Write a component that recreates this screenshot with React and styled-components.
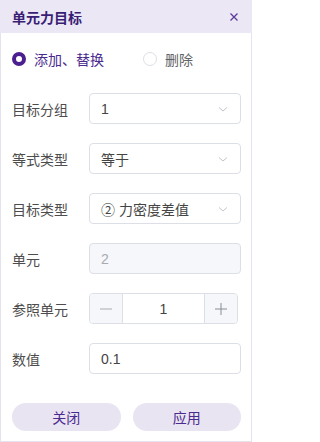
import React, { useState } from "react";
import styled, { createGlobalStyle } from "styled-components";

const GlobalStyle = createGlobalStyle`
  body {
    margin: 0;
    font-family: "Liberation Sans", "Noto Sans CJK SC", sans-serif;
    background: #fff;
  }
`;

const Panel = styled.div`
  width: 252px;
  height: 442px;
  box-sizing: border-box;
  border: 1px solid #e6e2ee;
  border-top: none;
  display: flex;
  flex-direction: column;
  background: #fff;
`;

const Header = styled.div`
  height: 33px;
  margin: 0 -1px;
  padding: 0 10px 0 12px;
  background: #ebe7f4;
  display: flex;
  align-items: center;
  justify-content: space-between;
`;

const Title = styled.div`
  font-size: 14px;
  font-weight: 700;
  color: #3a1d74;
`;

const Close = styled.button`
  border: none;
  background: none;
  padding: 0;
  width: 16px;
  height: 16px;
  display: flex;
  align-items: center;
  justify-content: center;
  cursor: pointer;
`;

const Body = styled.div`
  padding: 16px 10px 0 11px;
  display: flex;
  flex-direction: column;
`;

const RadioRow = styled.div`
  height: 20px;
  display: flex;
  align-items: center;
`;

const RadioItem = styled.label`
  display: flex;
  align-items: center;
  gap: 8px;
  width: ${(p) => p.width || "auto"};
  font-size: 14px;
  color: ${(p) => (p.checked ? "#4b2a90" : "#606266")};
  cursor: pointer;
`;

const RadioDot = styled.span`
  width: 14px;
  height: 14px;
  box-sizing: border-box;
  border-radius: 50%;
  border: ${(p) => (p.checked ? "4px solid #4b1f8f" : "1px solid #dcdfe6")};
  background: #fff;
`;

const Form = styled.div`
  margin-top: 24px;
  display: flex;
  flex-direction: column;
  gap: 19px;
`;

const Row = styled.div`
  display: flex;
  align-items: center;
  height: 31px;
`;

const Label = styled.div`
  width: 77px;
  flex-shrink: 0;
  font-size: 14px;
  color: #4d4d4d;
`;

const Box = styled.div`
  flex: 1;
  height: 31px;
  box-sizing: border-box;
  border: 1px solid #dcdfe6;
  border-radius: 4px;
  background: ${(p) => (p.disabled ? "#f5f7fa" : "#fff")};
  display: flex;
  align-items: center;
  justify-content: space-between;
  padding: 0 11px 0 11px;
  font-size: 14px;
  color: ${(p) => (p.disabled ? "#a8abb2" : "#444")};
`;

const Stepper = styled.div`
  width: 149px;
  height: 31px;
  box-sizing: border-box;
  border: 1px solid #dcdfe6;
  border-radius: 4px;
  display: flex;
  overflow: hidden;
`;

const StepButton = styled.div`
  width: 32px;
  background: #f5f7fa;
  display: flex;
  align-items: center;
  justify-content: center;
  border-left: ${(p) => (p.side === "right" ? "1px solid #dcdfe6" : "none")};
  border-right: ${(p) => (p.side === "left" ? "1px solid #dcdfe6" : "none")};
`;

const StepValue = styled.div`
  flex: 1;
  display: flex;
  align-items: center;
  justify-content: center;
  font-size: 14px;
  color: #444;
`;

const Footer = styled.div`
  margin-top: 29px;
  display: flex;
  gap: 12px;
`;

const PillButton = styled.button`
  flex: 1;
  height: 28px;
  border: none;
  border-radius: 14px;
  background: #e9e4f1;
  color: #4b2a90;
  font-family: inherit;
  font-size: 14px;
  cursor: pointer;
`;

const Chevron = () => (
  <svg width="12" height="12" viewBox="0 0 12 12" fill="none">
    <path d="M2 4.5l4 3.5 4-3.5" stroke="#c0c4cc" strokeWidth="1" />
  </svg>
);

export default function App() {
  const [mode, setMode] = useState("add");

  return (
    <>
      <GlobalStyle />
      <Panel>
        <Header>
          <Title>单元力目标</Title>
          <Close>
            <svg width="10" height="10" viewBox="0 0 10 10">
              <path d="M1.5 1.5l7 7M8.5 1.5l-7 7" stroke="#5a3d9a" strokeWidth="1.3" />
            </svg>
          </Close>
        </Header>
        <Body>
          <RadioRow>
            <RadioItem width="131px" checked={mode === "add"} onClick={() => setMode("add")}>
              <RadioDot checked={mode === "add"} />
              添加、替换
            </RadioItem>
            <RadioItem checked={mode === "del"} onClick={() => setMode("del")}>
              <RadioDot checked={mode === "del"} />
              删除
            </RadioItem>
          </RadioRow>
          <Form>
            <Row>
              <Label>目标分组</Label>
              <Box>
                1
                <Chevron />
              </Box>
            </Row>
            <Row>
              <Label>等式类型</Label>
              <Box>
                等于
                <Chevron />
              </Box>
            </Row>
            <Row>
              <Label>目标类型</Label>
              <Box>
                ② 力密度差值
                <Chevron />
              </Box>
            </Row>
            <Row>
              <Label>单元</Label>
              <Box disabled>2</Box>
            </Row>
            <Row>
              <Label>参照单元</Label>
              <Stepper>
                <StepButton side="left">
                  <svg width="14" height="14" viewBox="0 0 14 14">
                    <path d="M1 7h12" stroke="#a8abb2" strokeWidth="1" />
                  </svg>
                </StepButton>
                <StepValue>1</StepValue>
                <StepButton side="right">
                  <svg width="14" height="14" viewBox="0 0 14 14">
                    <path d="M1 7h12M7 1v12" stroke="#8a8d94" strokeWidth="1" />
                  </svg>
                </StepButton>
              </Stepper>
            </Row>
            <Row>
              <Label>数值</Label>
              <Box>0.1</Box>
            </Row>
          </Form>
          <Footer>
            <PillButton>关闭</PillButton>
            <PillButton>应用</PillButton>
          </Footer>
        </Body>
      </Panel>
    </>
  );
}
